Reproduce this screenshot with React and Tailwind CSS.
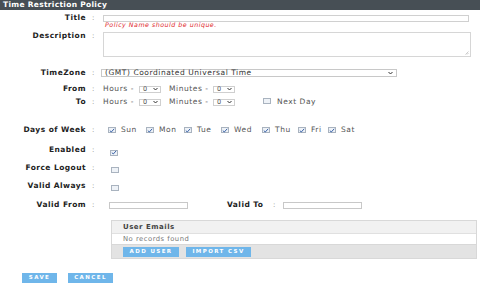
import React from "react";

const font = { fontFamily: '"DejaVu Sans", Verdana, sans-serif' };

function Check({ checked = true }) {
  return (
    <span className="inline-flex w-[8px] h-[6px] border border-[#a9b3bf] bg-[#eef2f7] items-center justify-center shrink-0">
      {checked && (
        <svg width="6" height="5" viewBox="0 0 6 5">
          <path d="M0.8 2.6 L2.3 4 L5.2 0.8" fill="none" stroke="#3a63a8" strokeWidth="1" />
        </svg>
      )}
    </span>
  );
}

function Arrow() {
  return (
    <svg width="5" height="4" viewBox="0 0 5 4">
      <path d="M0.5 1 L2.5 3 L4.5 1" fill="none" stroke="#333" strokeWidth="1" />
    </svg>
  );
}

function Label({ children }) {
  return (
    <div className="flex items-center shrink-0">
      <div className="w-[86px] text-right font-bold text-[7.5px] tracking-[0.45px] text-[#222] leading-[8px] whitespace-nowrap">{children}</div>
      <div className="w-[17px] pl-[6px] text-[7px] text-[#777] leading-[8px]">:</div>
    </div>
  );
}

function Sel({ value }) {
  return (
    <span className="inline-flex items-center justify-between w-[22px] h-[7px] border border-[#cfcfcf] bg-white pl-[3px] pr-[2px] text-[6.5px] text-[#555] leading-none">
      <span>{value}</span>
      <Arrow />
    </span>
  );
}

function Btn({ children, w }) {
  return (
    <div className={`${w} h-[10px] bg-[#6fb6ea] flex items-center justify-center text-white font-bold text-[5.5px] tracking-[1.4px] leading-none`}>
      {children}
    </div>
  );
}

export default function App() {
  const days = [
    ["Sun", "w-[38px]"],
    ["Mon", "w-[38px]"],
    ["Tue", "w-[37px]"],
    ["Wed", "w-[41px]"],
    ["Thu", "w-[36px]"],
    ["Fri", "w-[30px]"],
    ["Sat", "w-[30px]"],
  ];
  return (
    <div className="w-[480px] h-[300px] bg-white overflow-hidden" style={font}>
      <div className="h-[10px] bg-[#474f55] flex items-center pl-[3px] text-white font-bold text-[7.5px] tracking-[0.3px] leading-none">
        Time Restriction Policy
      </div>
      {/* Title */}
      <div className="mt-[4px] h-[8px] flex items-center">
        <Label>Title</Label>
        <div className="w-[366px] h-[7px] border border-[#d0d0d0] bg-white" />
      </div>
      <div className="h-[5px] mt-[1px] flex items-center pl-[105px] text-[6.3px] tracking-[0.5px] italic text-[#e0262a] leading-none">
        Policy Name should be unique.
      </div>
      {/* Description */}
      <div className="mt-[4px] flex items-start">
        <Label>Description</Label>
        <div className="w-[368px] h-[25px] border border-[#d6d6d6] bg-white relative">
          <svg className="absolute right-[1px] bottom-[1px]" width="4" height="4" viewBox="0 0 4 4">
            <path d="M3.5 0.5 L0.5 3.5 M3.5 2 L2 3.5" stroke="#aaa" strokeWidth="0.6" />
          </svg>
        </div>
      </div>
      {/* TimeZone */}
      <div className="mt-[11px] h-[9px] flex items-center">
        <Label>TimeZone</Label>
        <div className="-ml-[2px] w-[296px] h-[8px] border border-[#c8c8c8] bg-white flex items-center justify-between pl-[3px] pr-[3px] text-[7.5px] tracking-[0.55px] text-[#333] leading-none">
          <span>(GMT) Coordinated Universal Time</span>
          <Arrow />
        </div>
      </div>
      {/* From */}
      <div className="mt-[8px] h-[8px] flex items-center">
        <Label>From</Label>
        <div className="flex items-center text-[7.5px] tracking-[0.55px] text-[#555] leading-none">
          <span className="w-[36px] whitespace-nowrap">Hours -</span>
          <Sel value="0" />
          <span className="ml-[8px] w-[44px] whitespace-nowrap">Minutes -</span>
          <Sel value="0" />
        </div>
      </div>
      {/* To */}
      <div className="mt-[5px] h-[8px] flex items-center">
        <Label>To</Label>
        <div className="flex items-center text-[7.5px] tracking-[0.55px] text-[#555] leading-none">
          <span className="w-[36px] whitespace-nowrap">Hours -</span>
          <Sel value="0" />
          <span className="ml-[8px] w-[44px] whitespace-nowrap">Minutes -</span>
          <Sel value="0" />
          <span className="ml-[28px]"><Check checked={false} /></span>
          <span className="ml-[6px] whitespace-nowrap">Next Day</span>
        </div>
      </div>
      {/* Days */}
      <div className="mt-[20px] h-[8px] flex items-center">
        <Label>Days of Week</Label>
        <div className="flex items-center ml-[5px] text-[7.5px] tracking-[0.55px] text-[#555] leading-none">
          {days.map(([d, w]) => (
            <div key={d} className={`${w} flex items-center gap-[5px]`}>
              <Check />
              <span>{d}</span>
            </div>
          ))}
        </div>
      </div>
      {/* Enabled */}
      <div className="mt-[12px] h-[8px] flex items-center">
        <Label>Enabled</Label>
        <span className="ml-[7px]"><Check /></span>
      </div>
      <div className="mt-[10px] h-[8px] flex items-center">
        <Label>Force Logout</Label>
        <span className="ml-[8px]"><Check checked={false} /></span>
      </div>
      <div className="mt-[10px] h-[8px] flex items-center">
        <Label>Valid Always</Label>
        <span className="ml-[8px]"><Check checked={false} /></span>
      </div>
      {/* Valid from / to */}
      <div className="mt-[11px] h-[8px] flex items-center">
        <Label>Valid From</Label>
        <div className="ml-[6px] w-[79px] h-[7px] border border-[#c8c8c8] bg-white" />
        <div className="ml-[39px] w-[36px] font-bold text-[7.5px] tracking-[0.45px] text-[#222] leading-none whitespace-nowrap">Valid To</div>
        <div className="ml-[10px] text-[7px] text-[#777] leading-none">:</div>
        <div className="ml-[8px] w-[79px] h-[7px] border border-[#c8c8c8] bg-white" />
      </div>
      {/* User emails */}
      <div className="mt-[11px] ml-[111px] w-[366px] border border-[#d8d8d8] leading-none">
        <div className="h-[13px] bg-[#f1f1f1] border-b border-[#e0e0e0] flex items-center pl-[11px] font-bold text-[7px] tracking-[0.5px] text-[#444]">
          User Emails
        </div>
        <div className="h-[10px] bg-white flex items-center pl-[11px] text-[6.8px] tracking-[0.5px] text-[#777]">No records found</div>
        <div className="h-[14px] bg-[#e3e3e3] border-t border-[#d8d8d8] flex items-center pl-[11px] gap-[7px]">
          <Btn w="w-[56px]">ADD USER</Btn>
          <Btn w="w-[65px]">IMPORT CSV</Btn>
        </div>
      </div>
      {/* Save / Cancel */}
      <div className="mt-[14px] ml-[22px] flex gap-[11px]">
        <Btn w="w-[35px]">SAVE</Btn>
        <Btn w="w-[45px]">CANCEL</Btn>
      </div>
    </div>
  );
}
